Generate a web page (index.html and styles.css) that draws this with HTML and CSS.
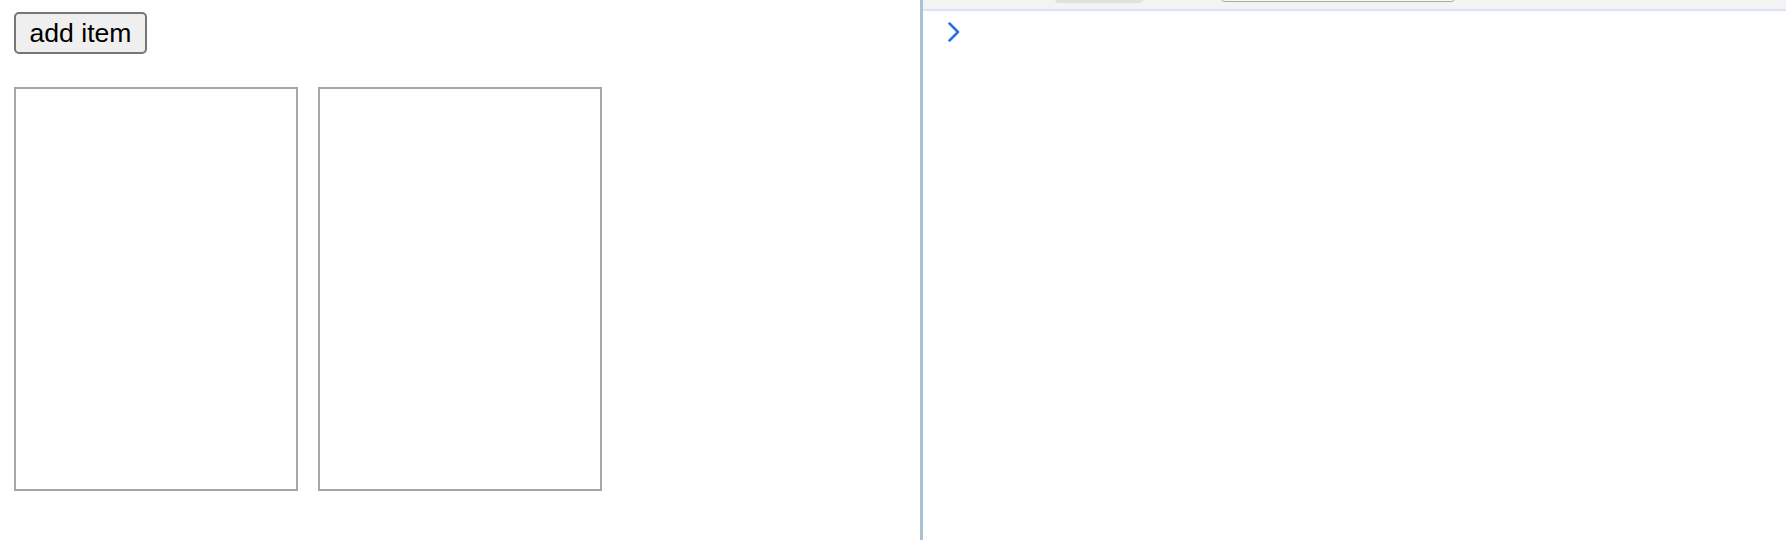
FILE: index.html
```html
<!DOCTYPE html>
<html>
<head>
<meta charset="utf-8">
<link rel="stylesheet" href="styles.css">
</head>
<body>
<div class="layout">
  <main class="page">
    <button class="add-btn">add item</button>
    <div class="items">
      <div class="item"></div>
      <div class="item"></div>
    </div>
  </main>
  <div class="divider"></div>
  <section class="console">
    <div class="toolbar">
      <div class="pill"></div>
      <div class="filter"></div>
    </div>
    <div class="prompt">
      <svg class="chevron" width="12" height="20" viewBox="0 0 12 20"><path d="M1.5 1.5 L10 10 L1.5 18.5" fill="none" stroke="#2a6fe0" stroke-width="2.5" stroke-linecap="round" stroke-linejoin="round"/></svg>
    </div>
  </section>
</div>
</body>
</html>
```

FILE: styles.css
```css
html, body {
  margin: 0;
  padding: 0;
  background: #fefefe;
  height: 100%;
}
.layout {
  display: flex;
  height: 540px;
  overflow: hidden;
}
.page {
  width: 920px;
  flex: none;
  padding: 12px 0 0 14px;
  box-sizing: border-box;
  background: #fefefe;
}
.add-btn {
  display: block;
  width: 133px;
  height: 42px;
  box-sizing: border-box;
  margin: 0;
  padding: 0;
  font-family: "Liberation Sans", Arial, sans-serif;
  font-size: 26.6px;
  color: #000;
  background: #efefef;
  border: 2px solid #767676;
  border-radius: 5px;
}
.items {
  display: flex;
  gap: 20px;
  margin-top: 33px;
}
.item {
  width: 284px;
  height: 404px;
  box-sizing: border-box;
  border: 2px solid #a6a6a6;
  background: #fefefe;
}
.divider {
  width: 3px;
  flex: none;
  background: #a8c2d4;
}
.console {
  flex: 1;
  background: #fefefe;
}
.toolbar {
  position: relative;
  height: 9px;
  background: #f3f3f3;
  border-bottom: 2px solid #d6e3fa;
}
.pill {
  position: absolute;
  left: 132px;
  top: -6px;
  width: 88px;
  height: 9px;
  background: #e0e0e0;
  border-radius: 4px;
}
.filter {
  position: absolute;
  left: 297px;
  top: -10px;
  width: 236px;
  height: 12px;
  box-sizing: border-box;
  border: 1px solid #a9a9a9;
  border-radius: 5px;
  background: #f7f7f7;
}
.prompt {
  padding: 11px 0 0 25px;
  height: 20px;
}
.chevron {
  display: block;
}
```
